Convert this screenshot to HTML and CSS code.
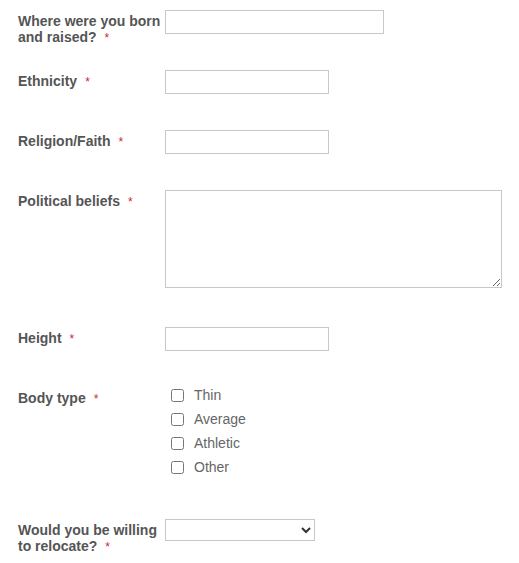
FILE: index.html
```html
<!doctype html>
<html lang="en-us">
  <head>
    <meta charset="utf-8">
    <title>Profile questions</title>
    <link rel="stylesheet" href="styles.css">
  </head>
  <body>
    <form class="form">
      <div class="row">
        <label class="label" for="born">Where were you born and raised?<span class="req">*</span></label>
        <input class="text wide" type="text" id="born" name="born">
      </div>

      <div class="row">
        <label class="label" for="ethnicity">Ethnicity<span class="req">*</span></label>
        <input class="text" type="text" id="ethnicity" name="ethnicity">
      </div>

      <div class="row">
        <label class="label" for="religion">Religion/Faith<span class="req">*</span></label>
        <input class="text" type="text" id="religion" name="religion">
      </div>

      <div class="row">
        <label class="label" for="politics">Political beliefs<span class="req">*</span></label>
        <textarea class="area" id="politics" name="politics"></textarea>
      </div>

      <div class="row">
        <label class="label" for="height">Height<span class="req">*</span></label>
        <input class="text" type="text" id="height" name="height">
      </div>

      <div class="row">
        <span class="label">Body type<span class="req">*</span></span>
        <div class="checks">
          <label class="check"><input type="checkbox" name="body" value="thin"><span>Thin</span></label>
          <label class="check"><input type="checkbox" name="body" value="average"><span>Average</span></label>
          <label class="check"><input type="checkbox" name="body" value="athletic"><span>Athletic</span></label>
          <label class="check"><input type="checkbox" name="body" value="other"><span>Other</span></label>
        </div>
      </div>

      <div class="row">
        <label class="label" for="relocate">Would you be willing to relocate?<span class="req">*</span></label>
        <select class="pick" id="relocate" name="relocate">
          <option value=""></option>
          <option value="yes">Yes</option>
          <option value="no">No</option>
        </select>
      </div>
    </form>
  </body>
</html>
```

FILE: styles.css
```css
body {
  font-family: "Liberation Sans", Arial, sans-serif;
  font-size: 14px;
  margin: 0;
  padding: 10px 0 40px 18px;
  background: #fff;
  color: #555;
}

.form {
  display: flex;
  flex-direction: column;
  gap: 36px;
}

.row {
  display: flex;
  align-items: flex-start;
}

.label {
  flex: 0 0 147px;
  box-sizing: border-box;
  height: 24px;
  padding-top: 3px;
  line-height: 16px;
  font-weight: bold;
  color: #555;
}

.req {
  margin-left: 8px;
  font-size: 12px;
  font-weight: normal;
  color: #d0243a;
}

.text {
  box-sizing: border-box;
  width: 164px;
  height: 24px;
  margin: 0;
  border: 1px solid #c8c8c8;
  border-radius: 0;
  padding: 2px 4px;
  font: inherit;
}
.text.wide { width: 219px; }

.area {
  display: block;
  box-sizing: border-box;
  width: 337px;
  height: 98px;
  margin: 0 0 3px;
  border: 1px solid #c8c8c8;
  border-radius: 0;
  font: inherit;
}

.checks {
  display: flex;
  flex-direction: column;
  margin: -4px 0 4px;
  padding-left: 6px;
}

.check {
  display: flex;
  align-items: center;
  height: 24px;
  color: #666;
}
.check input {
  width: 13px;
  height: 13px;
  margin: 0 10px 0 0;
}

.pick {
  box-sizing: border-box;
  width: 150px;
  height: 22px;
  margin: 0;
  border: 1px solid #c8c8c8;
  border-radius: 0;
  background: #fff;
  font: inherit;
  color: #333;
}
```
